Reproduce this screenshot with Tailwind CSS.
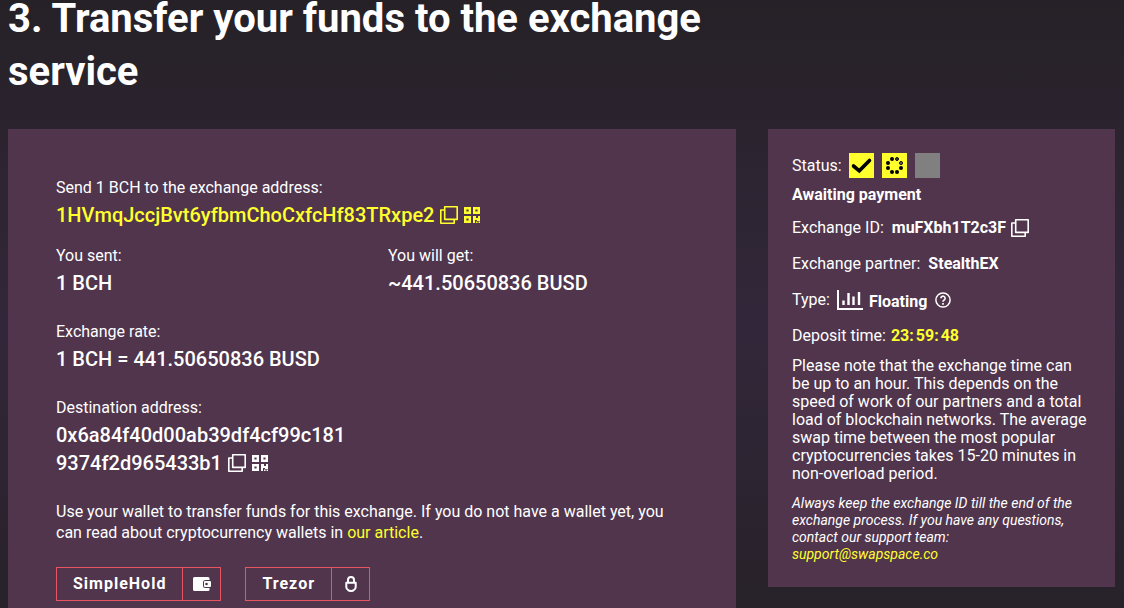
<!DOCTYPE html>
<html lang="en">

<head>
    <meta charset="UTF-8">
    <meta name="viewport" content="width=device-width, initial-scale=1.0">
    <title>Transfer your funds</title>
    <script src="https://cdn.jsdelivr.net/npm/@tailwindcss/browser@4"></script>
</head>

<body class="bg-[#272228] bg-linear-to-b from-[#262127] via-[#32273a] to-[#262127] font-['Roboto',sans-serif] text-base text-white">

    <!-- icons shared by several rows -->
    <svg class="hidden" aria-hidden="true">
        <symbol id="copy" viewBox="0 0 18 18">
            <path d="M4.7.8h12.5v12.6H4.7zM4.5 4H.8v13.2h13.4v-3.6" fill="none" stroke="currentColor" stroke-width="1.6" stroke-linejoin="round" />
        </symbol>
        <symbol id="qr" viewBox="0 0 16 16">
            <path d="M1.2 1.2h4.6v4.6H1.2zM10.2 1.2h4.6v4.6h-4.6zM1.2 10.2h4.6v4.6H1.2z" fill="none" stroke="currentColor" stroke-width="2.4" />
            <path d="M9 9h3v2h2V9h2v5h-3v-1h-2v3H9zM12 14.5h1.5V16H12zM14.5 14.5H16V16h-1.5z" fill="currentColor" />
        </symbol>
    </svg>

    <main class="pl-2 pr-[9px]">
        <h1 class="-mt-2 mb-[31px] max-w-3xl text-[40px] leading-[53px] font-bold">3. Transfer your funds to the exchange service</h1>

        <div class="grid grid-cols-[728fr_347fr] gap-8 items-start">
            <section class="bg-[#50354d] px-12 pt-[46px] pb-12">
                <div>
                    <p class="leading-[26px]">Send 1 BCH to the exchange address:</p>
                    <div class="flex items-center text-xl leading-7 font-medium text-[#ffff2e]">
                        <span>1HVmqJccjBvt6yfbmChoCxfcHf83TRxpe2</span>
                        <button type="button" aria-label="Copy address" class="ml-1.5"><svg class="size-[18px]"><use href="#copy" /></svg></button>
                        <button type="button" aria-label="Show QR code" class="ml-1.5"><svg class="size-4"><use href="#qr" /></svg></button>
                    </div>
                </div>

                <div class="mt-3.5 grid grid-cols-[332fr_300fr]">
                    <div>
                        <p class="leading-[26px]">You sent:</p>
                        <p class="text-xl leading-7 font-medium">1 BCH</p>
                    </div>
                    <div>
                        <p class="leading-[26px]">You will get:</p>
                        <p class="text-xl leading-7 font-medium">~441.50650836 BUSD</p>
                    </div>
                </div>

                <div class="mt-[22px]">
                    <p class="leading-[26px]">Exchange rate:</p>
                    <p class="text-xl leading-7 font-medium">1 BCH = 441.50650836 BUSD</p>
                </div>

                <div class="mt-[22px]">
                    <p class="leading-[26px]">Destination address:</p>
                    <div class="text-xl leading-7 font-medium">
                        <p>0x6a84f40d00ab39df4cf99c181</p>
                        <div class="flex items-center">
                            <span>9374f2d965433b1</span>
                            <button type="button" aria-label="Copy address" class="ml-1.5"><svg class="size-[18px]"><use href="#copy" /></svg></button>
                            <button type="button" aria-label="Show QR code" class="ml-1.5"><svg class="size-4"><use href="#qr" /></svg></button>
                        </div>
                    </div>
                </div>

                <p class="mt-6 leading-[21px]">Use your wallet to transfer funds for this exchange. If you do not have a wallet yet, you can read about cryptocurrency wallets in <a href="#" class="text-[#ffff2e]">our article</a>.</p>

                <div class="mt-6 flex gap-6 font-bold tracking-[1px]">
                    <a href="#" class="flex h-[34px] items-center border border-[#e85460]">
                        <span class="px-4">SimpleHold</span>
                        <span class="flex h-full w-[38px] items-center justify-center border-l border-[#e85460]">
                            <svg class="w-[18px] h-3.5" viewBox="0 0 18 14">
                                <path d="M1.5 0H15a1.5 1.5 0 0 1 1.5 1.5V3h-4A2.5 2.5 0 0 0 10 5.5v3a2.5 2.5 0 0 0 2.5 2.5h4v1.5A1.5 1.5 0 0 1 15 14H1.5A1.5 1.5 0 0 1 0 12.5v-11A1.5 1.5 0 0 1 1.5 0z" fill="white" />
                                <rect x="11" y="4" width="7" height="6" rx="1" fill="white" />
                                <circle cx="13.5" cy="7" r="1.3" fill="#50354d" />
                            </svg>
                        </span>
                    </a>
                    <a href="#" class="flex h-[34px] items-center border border-[#e85460]">
                        <span class="px-4">Trezor</span>
                        <span class="flex h-full w-[38px] items-center justify-center border-l border-[#e85460]">
                            <svg class="w-3 h-4" viewBox="0 0 12 16" fill="none" stroke="white" stroke-width="2">
                                <path d="M3 6.5V4a3 3 0 0 1 6 0v2.5" />
                                <path d="M1.3 6.7h9.4V11q0 2-1.8 3Q8 15 6 15t-2.900-1q-1.800-1-1.800-3z" stroke-linejoin="round" />
                            </svg>
                        </span>
                    </a>
                </div>
            </section>

            <aside class="bg-[#50354d] p-6 leading-6">
                <div class="flex items-center">
                    <span class="mr-[7px]">Status:</span>
                    <div class="flex gap-2">
                        <svg class="size-[25px] bg-[#ffff2e]" viewBox="0 0 25 25">
                            <path d="M4.5 13l5.8 4.8L20.5 7.5" fill="none" stroke="black" stroke-width="3.6" stroke-linecap="round" />
                        </svg>
                        <svg class="size-[25px] bg-[#ffff2e]" viewBox="0 0 25 25">
                            <circle cx="10" cy="6" r="2" />
                            <circle cx="15" cy="6" r="1.5" stroke="black" fill="#444" />
                            <circle cx="19" cy="10" r="1.5" stroke="black" fill="#777" />
                            <circle cx="19" cy="15" r="2" />
                            <circle cx="15" cy="19" r="2" />
                            <circle cx="10" cy="19" r="2" />
                            <circle cx="6" cy="15" r="2" />
                            <circle cx="6" cy="10" r="2" />
                        </svg>
                        <span class="size-[25px] bg-[#808080]"></span>
                    </div>
                </div>
                <p class="mt-[5px] font-bold">Awaiting payment</p>

                <div class="mt-[9px] flex items-center">
                    <span>Exchange ID:</span>
                    <span class="ml-2 font-bold">muFXbh1T2c3F</span>
                    <button type="button" aria-label="Copy exchange ID" class="ml-[5px]"><svg class="size-[18px]"><use href="#copy" /></svg></button>
                </div>
                <p class="mt-3">Exchange partner: <span class="ml-1 font-bold">StealthEX</span></p>
                <div class="mt-3 flex h-6 items-center">
                    <span>Type:</span>
                    <svg class="ml-[7px] w-[26px] h-5" viewBox="0 0 26 20" fill="none" stroke="white" stroke-width="2">
                        <path d="M1 0v19h25" />
                        <path d="M6.5 10.5V15M11.5 3v12M16.5 6.500V15M22 2v13" stroke-width="2.4" />
                    </svg>
                    <span class="ml-1.5 pt-1 font-bold">Floating</span>
                    <button type="button" aria-label="About floating rate" class="ml-2">
                        <svg class="size-4" viewBox="0 0 16 16" fill="none" stroke="white" stroke-width="1.5">
                            <circle cx="8" cy="8" r="7.1" />
                            <path d="M5.9 6.3a2.1 2.1 0 1 1 3.3 1.7Q8 8.7 8 9.8" stroke-width="1.6" />
                            <path d="M8 11v1.7" stroke-width="1.7" />
                        </svg>
                    </button>
                </div>
                <p class="mt-3">Deposit time: <time class="ml-px font-bold text-[#ffff2e]"><span class="mr-0.5">23:</span><span class="mr-0.5">59:</span><span>48</span></time></p>

                <p class="mt-[9px] leading-[18px]">Please note that the exchange time can be up to an hour. This depends on the speed of work of our partners and a total load of blockchain networks. The average swap time between the most popular cryptocurrencies takes 15-20 minutes in non-overload period.</p>
                <p class="mt-3 text-sm leading-[17px] italic">Always keep the exchange ID till the end of the exchange process. If you have any questions, contact our support team: <a href="mailto:support@swapspace.co" class="block text-[#ffff2e]">support@swapspace.co</a></p>
            </aside>
        </div>
    </main>
</body>

</html>
